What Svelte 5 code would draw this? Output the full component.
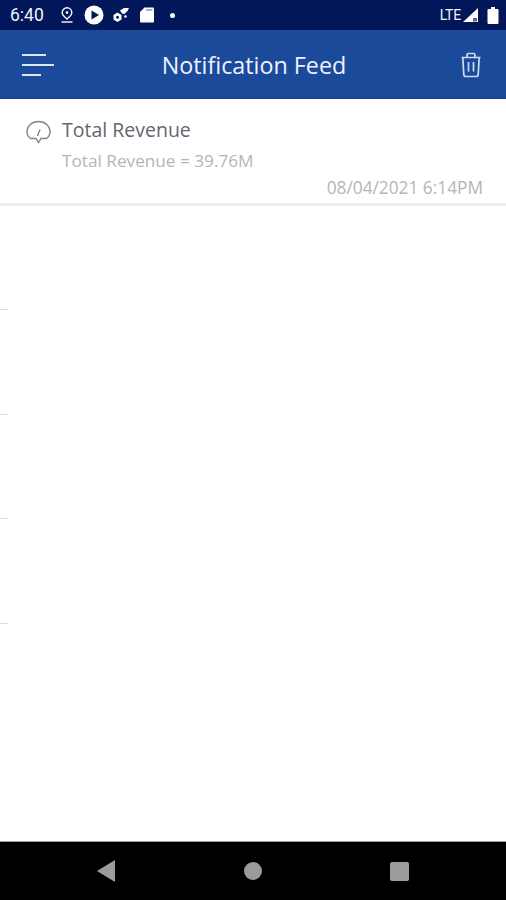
<script>
  const ticks = [0, 1, 2, 3];
</script>

<div class="screen">
  <div class="status">
    <span class="time">6:40</span>
    <svg class="ic" width="18" height="18" viewBox="0 0 18 18" fill="none" stroke="#fff" stroke-width="1.400">
      <path d="M9 1.800a4.800 4.800 0 0 1 4.800 4.800c0 3-2.600 4.600-4.800 6.400C6.800 11.200 4.200 9.600 4.200 6.600A4.800 4.800 0 0 1 9 1.800z" />
      <circle cx="9" cy="6.600" r="1.300" fill="#fff" stroke="none" />
      <path d="M3.500 16h11" />
    </svg>
    <svg class="ic play" width="20" height="20" viewBox="0 0 20 20">
      <circle cx="10" cy="10" r="9.500" fill="#fff" />
      <path d="M7.500 5.500 15 10l-7.500 4.500z" fill="#02175c" />
    </svg>
    <svg class="ic cog" width="18" height="18" viewBox="0 0 18 18">
      <path d="M5.500 6.500 9.500 9v4.500l-4 2.500-4-2.500V9z" fill="#fff" />
      <circle cx="5.500" cy="11.300" r="1.500" fill="#02175c" />
      <path d="M8 4.500 12 2h5l-1.500 3-3 3L10 7.500z" fill="#fff" />
      <circle cx="13.500" cy="10.500" r="1.300" fill="#fff" />
    </svg>
    <svg class="ic sd" width="16" height="18" viewBox="0 0 16 18">
      <path d="M5.500 1.500H14a1 1 0 0 1 1 1v13a1 1 0 0 1-1 1H2a1 1 0 0 1-1-1V6z" fill="#fff" />
      <path d="M7 3.200h6.500v1.500H7z" fill="#8c93ab" />
    </svg>
    <span class="dot"></span>
    <span class="spacer"></span>
    <span class="lte">LTE</span>
    <svg class="ic signal" width="17" height="16" viewBox="0 0 17 16">
      <path d="M16 1v14H1z" fill="#fff" />
      <path d="M11 11h4v3.500h-4z" fill="#5b6a96" />
    </svg>
    <svg class="ic battery" width="12" height="17" viewBox="0 0 12 17">
      <path d="M4 0h4v2h2.500a1 1 0 0 1 1 1v13a1 1 0 0 1-1 1h-9a1 1 0 0 1-1-1V3a1 1 0 0 1 1-1H4z" fill="#fff" />
    </svg>
  </div>

  <header class="bar">
    <div class="menu">
      <span class="l1"></span>
      <span class="l2"></span>
      <span class="l3"></span>
    </div>
    <h1>Notification Feed</h1>
    <svg class="trash" width="22" height="26" viewBox="0 0 22 26" fill="none" stroke="#cfdcf0" stroke-width="1.700">
      <path d="M1.500 5.500h19M7 5.500V3a1.500 1.500 0 0 1 1.500-1.500h5A1.500 1.500 0 0 1 15 3v2.500" />
      <path d="M2.800 5.500l1 17a2 2 0 0 0 2 2h10.400a2 2 0 0 0 2-2l1-17" />
      <path d="M8.500 10v9.500M13.500 10v9.500" />
    </svg>
  </header>

  <div class="card">
    <div class="row">
      <svg class="gauge" width="25" height="24" viewBox="0 0 25 24" fill="none" stroke="#80838a" stroke-width="1.400">
        <path d="M4.500 18.500C2.500 17 1 14.500 1 12 1 6 6 1.500 12.500 1.500S24 6 24 12c0 2.500-1.500 5-3.500 6.500h-5.500L12.500 22.500 10 18.500z" />
        <path d="M11.500 16l2.500-6.500" />
      </svg>
      <div class="text">
        <div class="title">Total Revenue</div>
        <div class="sub">Total Revenue = 39.76M</div>
      </div>
    </div>
    <div class="date">08/04/2021 6:14PM</div>
  </div>

  <main class="body">
    {#each ticks as t}
      <span class="tick"></span>
    {/each}
  </main>

  <nav class="nav">
    <svg width="18" height="22" viewBox="0 0 18 22"><path d="M18 0v22L0 11z" fill="#9b9b9b" /></svg>
    <span class="home"></span>
    <span class="recent"></span>
  </nav>
</div>

<style>
  :global(body) {
    margin: 0;
    background: #fff;
  }
  .screen {
    width: 506px;
    height: 900px;
    display: flex;
    flex-direction: column;
    overflow: hidden;
    font-family: "Open Sans", "Noto Sans", sans-serif;
  }
  .status {
    height: 30px;
    box-sizing: border-box;
    flex: none;
    display: flex;
    align-items: center;
    padding: 0 7px 0 10px;
    background: #02165a;
    color: #f1f3f8;
  }
  .time {
    font-family: Roboto, sans-serif;
    font-size: 17.500px;
    width: 48px;
  }
  .ic {
    flex: none;
  }
  .play {
    margin-left: 8px;
  }
  .cog {
    margin-left: 8px;
  }
  .sd {
    margin-left: 9px;
  }
  .dot {
    width: 5px;
    height: 5px;
    margin-left: 15px;
    border-radius: 50%;
    background: #fff;
  }
  .spacer {
    flex: 1;
  }
  .lte {
    font-family: Roboto, sans-serif;
    font-size: 14px;
    letter-spacing: -0.2px;
    margin-right: 1px;
  }
  .battery {
    margin-left: 8px;
  }
  .bar {
    height: 69px;
    box-sizing: border-box;
    flex: none;
    display: flex;
    align-items: center;
    padding: 1px 24px 0 22px;
    background: #1b4a9b;
    border-bottom: 1px solid #123c88;
  }
  .menu {
    width: 32px;
    flex: none;
    display: flex;
    flex-direction: column;
    gap: 8px;
  }
  .menu span {
    height: 2px;
    background: #dbe5f5;
  }
  .l1 {
    width: 24px;
  }
  .l2 {
    width: 32px;
  }
  .l3 {
    width: 19px;
  }
  h1 {
    flex: 1;
    margin: 0;
    padding-right: 6px;
    text-align: center;
    font-size: 23.300px;
    font-weight: 400;
    color: #eef3fb;
  }
  .trash {
    flex: none;
  }
  .card {
    flex: none;
    height: 107px;
    box-sizing: border-box;
    padding: 18px 23px 0 26px;
    border-bottom: 3px solid #eeeeee;
    background: #fff;
  }
  .row {
    display: flex;
    gap: 11px;
  }
  .gauge {
    margin-top: 3px;
  }
  .title {
    font-size: 19.500px;
    line-height: 26px;
    color: #62666f;
  }
  .sub {
    margin-top: 7px;
    font-size: 17.200px;
    line-height: 22px;
    color: #b4b5b8;
  }
  .date {
    margin-top: 5px;
    text-align: right;
    font-size: 17.300px;
    line-height: 22px;
    color: #b4b5b8;
  }
  .body {
    flex: 1;
    display: flex;
    flex-direction: column;
    gap: 103.500px;
    padding-top: 103px;
    background: #fff;
  }
  .tick {
    width: 8px;
    height: 1px;
    background: #dddddd;
  }
  .nav {
    height: 59px;
    box-sizing: border-box;
    flex: none;
    display: flex;
    align-items: center;
    padding: 0 97px 0 97px;
    justify-content: space-between;
    background: #000;
    border-top: 1px solid #9a9a9a;
  }
  .home {
    width: 18px;
    height: 18px;
    border-radius: 50%;
    background: #9b9b9b;
  }
  .recent {
    width: 19px;
    height: 19px;
    border-radius: 2px;
    background: #9b9b9b;
  }
</style>
